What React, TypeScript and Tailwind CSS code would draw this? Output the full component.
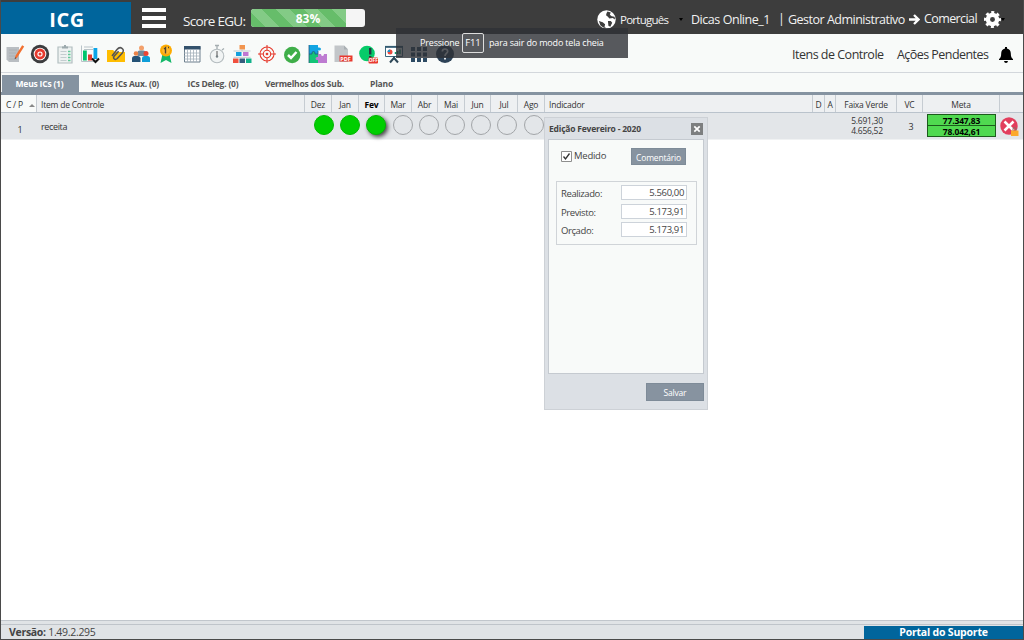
import type { ReactNode } from "react";
import clsx from "clsx";

const tabs = [
  { label: "Meus ICs (1)", cls: "w-[77px] bg-[#8593a1] pr-0.5 text-white" },
  { label: "Meus ICs Aux. (0)", cls: "w-[92px]" },
  { label: "ICs Deleg. (0)", cls: "w-[84px]" },
  { label: "Vermelhos dos Sub.", cls: "w-[99px]" },
  { label: "Plano", cls: "w-[55px]" },
];

const columns = [
  { label: "C / P", cls: "w-[36px] pl-[5px] bg-[#f8faf9]" },
  { label: "Item de Controle", cls: "w-[268px] pl-1" },
  { label: "Dez", cls: "w-[27px] justify-center" },
  { label: "Jan", cls: "w-[27px] justify-center" },
  { label: "Fev", cls: "w-[26px] justify-center font-bold text-black" },
  { label: "Mar", cls: "w-[27px] justify-center" },
  { label: "Abr", cls: "w-[26px] justify-center" },
  { label: "Mai", cls: "w-[27px] justify-center" },
  { label: "Jun", cls: "w-[26px] justify-center" },
  { label: "Jul", cls: "w-[27px] justify-center" },
  { label: "Ago", cls: "w-[27px] justify-center" },
  { label: "Indicador", cls: "w-[268px] pl-1" },
  { label: "D", cls: "w-[12px] justify-center" },
  { label: "A", cls: "w-[11px] justify-center" },
  { label: "Faixa Verde", cls: "w-[61px] justify-center" },
  { label: "VC", cls: "w-[26px] justify-center" },
  { label: "Meta", cls: "w-[77px] justify-center" },
];

const months = [true, true, true, false, false, false, false, false, false];

const fields = [
  { label: "Realizado:", value: "5.560,00" },
  { label: "Previsto:", value: "5.173,91" },
  { label: "Orçado:", value: "5.173,91" },
];

// every toolbar icon is drawn on a 20x20 grid
const icons: ReactNode[] = [
  <>
    <path d="M1.500 3H14v15H4l-2.500-2.500z" fill="#b9bec2" />
    <path d="M4 6h8M4 9h7M4 12h6M4 15h8" stroke="#a6acb0" strokeWidth=".8" />
    <path d="M17.200 1.200l2 1.200-7 11-2.300 1.500.4-3z" fill="#f2702f" />
    <path d="M9.700 15.200l.3-2 1.300.9z" fill="#3b4a55" />
  </>,
  <>
    <circle cx="10" cy="10" r="9.200" fill="#3d3d3f" />
    <circle cx="10" cy="10" r="6.300" fill="#fff" />
    <circle cx="10" cy="10" r="5.400" fill="#e63a2e" />
    <circle cx="10" cy="10" r="2.600" fill="#fff" />
    <circle cx="10" cy="10" r="1.500" fill="#e63a2e" />
  </>,
  <>
    <path d="M3 3h14v16H3z" fill="#eef2f1" stroke="#b2bec0" strokeWidth="1.200" />
    <path d="M7 4.500V2.500h2V1h2v1.500h2v2z" fill="#9daaad" />
    <path d="M5.500 7.500h6M5.500 10.500h6M5.500 13.500h6M5.500 16.500h6" stroke="#c3cdcf" />
    <path d="M13 7.500h2.500M13 10.500h2.500M13 13.500h2.500M13 16.500h2.500" stroke="#5fcb98" strokeWidth="1.300" />
  </>,
  <>
    <path d="M1.500 1.500v16H14M4 3h9M4 5.500h9" fill="none" stroke="#b9c3c8" />
    <path d="M3 6.500h3.800v10H3z" fill="#00c56c" />
    <path d="M8 10.500h4v6H8z" fill="#e23d30" />
    <path d="M13.500 4h3.800v11h-3.800z" fill="#0aa5e8" />
    <path d="M12 14.500l3.500 3.500L19 14.500" fill="none" stroke="#111" strokeWidth="2" />
  </>,
  <>
    <path d="M1 6h6l2 2h10v10H1z" fill="#ffbd00" />
    <path d="M6 12l5-6.500q2.500-3 5-1.200t.3 4.700l-5 5.500q-1.700 1.500-3 .5t-.2-2.800l4.500-5" fill="none" stroke="#555" strokeWidth="1.500" />
  </>,
  <>
    <circle cx="10.500" cy="4" r="2.500" fill="#f3a06b" />
    <path d="M6.500 12V8.500q0-2 2-2h4q2 0 2 2V12z" fill="#71889a" />
    <circle cx="5" cy="9.500" r="2.300" fill="#e98349" />
    <circle cx="15" cy="9.500" r="2.500" fill="#e94435" />
    <path d="M1 18v-3.500q0-2.500 2.500-2.500h3Q9.500 12 9.500 14.500V18z" fill="#245276" />
    <path d="M11 18v-3.500q0-2.500 2.500-2.500h3q2.500 0 2.500 2.500V18z" fill="#0e9dd8" />
  </>,
  <>
    <path d="M6.500 10h7L15.500 19 10 16l-5.500 3z" fill="#13b868" />
    <circle cx="10" cy="6.500" r="6" fill="#ffae00" />
    <circle cx="10" cy="6.500" r="4.300" fill="#ffb92b" stroke="#f29b00" strokeWidth=".6" />
    <path d="M8 5l1.500-1.300V9.500M12 3.500h1" fill="none" stroke="#4d4430" strokeWidth="1.400" />
  </>,
  <>
    <path d="M2.500 2.500h15.500v15.500H2.500z" fill="#fff" stroke="#6c7f8d" />
    <path d="M2 2h16.500v3.500H2z" fill="#33516c" />
    <path d="M2 9h16M2 12h16M2 15h16M5.500 6v12M8.500 6v12M11.500 6v12M14.500 6v12" stroke="#a3b0ba" strokeWidth=".8" />
  </>,
  <>
    <circle cx="10" cy="12" r="6.800" fill="#f1f4f4" stroke="#b4bcbf" strokeWidth="1.100" />
    <path d="M10 1v4M8 1.500h4M15 6l2-1.500" stroke="#a4adb0" strokeWidth="1.300" />
    <path d="M10 12.500V7" stroke="#555" />
    <circle cx="10" cy="12.500" r="1.200" fill="#758084" />
  </>,
  <>
    <path d="M7.500 1h5.500v4.500H7.500z" fill="#f2954f" />
    <path d="M4 8h5.500v4H4z" fill="#15a0dd" />
    <path d="M11 8h5.500v4H11z" fill="#c076d2" />
    <path d="M1 14.500h5.500V19H1z" fill="#f0503d" />
    <path d="M7.500 14.500H13V19H7.500z" fill="#355c7d" />
    <path d="M14 14.500h5.500V19H14z" fill="#12b28b" />
    <path d="M10 5.500v1.500M1.500 7h17M1.500 13.300h17" stroke="#b4bec2" strokeWidth=".8" />
  </>,
  <g fill="none" stroke="#e5392c" strokeWidth="1.100">
    <circle cx="10" cy="10" r="7" />
    <circle cx="10" cy="10" r="3.700" />
    <path d="M10 1v5M10 14v5M1 10h5M14 10h5" />
    <circle cx="10" cy="10" r=".8" fill="#e5392c" />
  </g>,
  <>
    <circle cx="9.200" cy="11" r="8.200" fill="#3fae49" />
    <path d="M5 11l3 3 5.500-6" fill="none" stroke="#fff" strokeWidth="2.500" />
  </>,
  <>
    <path d="M1 1h9v2.500q3-.5 3 1.500t-3 1.500V10H1z" fill="#12a4e2" />
    <path d="M1 10h3q-.5-2.500 1.500-2.500T7 10h3v9H1z" fill="#13c477" />
    <path d="M10 10h3q0 2 1.500 2T16 10h3v9h-9v-3q-2.500.5-2.500-1.500T10 13z" fill="#bd7bd1" />
    <path d="M1 1v18M1 10h3q-.5-2.500 1.500-2.500T7 10h3V7" fill="none" stroke="#24567c" strokeWidth=".8" />
  </>,
  <>
    <path d="M1.500 1.500H11l4 4V18H1.500z" fill="#c2c6c9" />
    <path d="M11 1.500v4h4" fill="#a9afb3" />
    <path d="M6.500 11.500h13v6h-13z" fill="#e8392f" />
    <text x="7.300" y="16.600" fill="#fff" fontSize="5.500" fontWeight="700" fontFamily="Open Sans">PDF</text>
  </>,
  <>
    <circle cx="8" cy="9.500" r="7.800" fill="#06cb69" />
    <path d="M11.200 4v6.500M11.200 12v2" stroke="#243642" strokeWidth="2.400" />
    <rect x="9.500" y="13.500" width="9.500" height="6" rx="1" fill="#e8392f" />
    <text x="9.800" y="18.400" fill="#fff" fontSize="4.800" fontWeight="700" fontFamily="Open Sans">OFF</text>
  </>,
  <>
    <path d="M1.500 3h17v9.500h-17z" fill="#fff" stroke="#3e677c" />
    <path d="M1 2.800h18" stroke="#345c73" strokeWidth="1.800" />
    <circle cx="6" cy="8" r="2.500" fill="#eb493e" />
    <path d="M6 8V5.500A2.500 2.500 0 0 0 3.500 8z" fill="#1796cf" />
    <path d="M11.500 10V8M13.700 10V7M16 10V5.500" stroke="#159b70" strokeWidth="1.500" />
    <path d="M10 12.500v2.500M9.500 14.500L6 18.500M10.500 14.500l3.500 4" stroke="#2f4858" strokeWidth="2" />
  </>,
  <path d="M2 3h4v4H2zM8 3h4v4H8zM14 3h4v4h-4zM2 8.500h4v4H2zM8 8.500h4v4H8zM14 8.500h4v4h-4zM2 14h4v4H2zM8 14h4v4H8zM14 14h4v4h-4z" fill="#2d4a63" />,
  <>
    <circle cx="10" cy="10" r="9" fill="#2d4257" />
    <path d="M7.300 7.500Q7.500 5 10 5t2.700 2.300C12.700 9.500 10 9.500 10 12M10 13.500v2" fill="none" stroke="#fff" strokeWidth="1.700" />
  </>,
];

function Header() {
  return (
    <header className="flex h-[34px] shrink-0 items-center bg-[#3d3d3d] pt-0.5 text-[#f2f2f2]">
      <div className="flex h-8 w-[130px] items-center justify-center self-end bg-[#00659c] pt-1 pl-0.5 text-[20px] font-bold tracking-[0.6px] text-white">ICG</div>
      <div className="ml-[11px] flex w-6 flex-col gap-[4px]">
        <i className="h-[4px] bg-white" />
        <i className="h-[4px] bg-white" />
        <i className="h-[4px] bg-white" />
      </div>
      <span className="ml-[17px] w-[68px] pt-1.5 text-[13.500px] tracking-[-0.7px]">Score EGU:</span>
      <div className="relative flex h-[18px] w-[114px] overflow-hidden rounded-[3px] bg-[#f5f5f5]">
        <div className="h-full w-[95px] bg-[repeating-linear-gradient(45deg,#66bd6a_0_10px,#83cb86_10px_20px)]" />
        <span className="absolute inset-0 text-center text-[12px] leading-[19px] font-bold text-white">83%</span>
      </div>
      <div className="ml-[232px] flex h-full items-center pt-[3px]">
        <svg className="size-[19px]" viewBox="0 0 20 20">
          <circle cx="10" cy="10" r="9.700" fill="#fff" />
          <path d="M11 1.500l3.500 1-1 2.500 2 1.500 3 .5.5 3-2.500-1.500-3.500.5-1.500-2-2-1.500.5-2zM2 11.500l4 1.500 2.500 2-.5 2.500 1.500 1.500-3-.5-3-2.500zM11.500 11.500l3 0 1.500 2-2 4-2-1z" fill="#3d3d3d" />
        </svg>
        <span className="ml-1 w-[59px] text-[11.500px] tracking-[-0.75px]">Português</span>
        <i className="size-0 border-x-2 border-t-[3px] border-x-transparent border-t-black" />
        <span className="ml-[8px] w-[87px] pt-0.5 text-[12.500px] tracking-[-0.45px]">Dicas Online_1</span>
        <span className="w-[10px] text-[12.500px]">|</span>
        <span className="w-[121px] pt-0.5 text-[12.500px] tracking-[-0.5px]">Gestor Administrativo</span>
        <svg className="h-[11px] w-[11px]" viewBox="0 0 11 11">
          <path d="M0 5.500h9M5 1l4.500 4.500L5 10" fill="none" stroke="#fff" strokeWidth="2.300" />
        </svg>
        <span className="ml-1 w-[60px] text-[12.500px] tracking-[-0.6px]">Comercial</span>
        <svg className="size-[17px]" viewBox="0 0 24 24">
          <circle cx="12" cy="12" r="6.500" fill="none" stroke="#fff" strokeWidth="6" />
          <circle cx="12" cy="12" r="10" fill="none" stroke="#fff" strokeWidth="4" strokeDasharray="4.200 3.654" strokeDashoffset="2.100" />
        </svg>
        <i className="size-0 border-x-2 border-t-[3px] border-x-transparent border-t-black" />
      </div>
    </header>
  );
}

function Toolbar() {
  return (
    <div className="flex h-[39px] shrink-0 items-center border-b border-[#d3d7dc] bg-[#f8faf9] pt-px pl-[3.500px]">
      <div className="flex gap-[5.300px]">
        {icons.map((icon, i) => (
          <svg key={i} className="size-5 shrink-0" viewBox="0 0 20 20">
            {icon}
          </svg>
        ))}
      </div>
      <div className="ml-auto flex items-center pt-0.5 pr-[10px] text-[12.500px] text-[#333]">
        <span className="w-[105px] pt-0.5 tracking-[-0.5px]">Itens de Controle</span>
        <span className="w-[102px] pt-0.5 tracking-[-0.55px]">Ações Pendentes</span>
        <svg className="h-4 w-[14px]" viewBox="0 0 14 16">
          <path d="M6 0h2v1.500c2.600.6 3.800 2.400 3.800 5 0 3 .7 4.500 2.200 5.500v1H0v-1c1.500-1 2.200-2.500 2.200-5.500 0-2.600 1.200-4.400 3.800-5zM5 14h4q-.3 2-2 2t-2-2z" fill="#000" />
        </svg>
      </div>
    </div>
  );
}

function Row() {
  return (
    <div className="flex h-[27px] shrink-0 items-center border-b border-[#f0f2f3] bg-[#e3e6e9] text-[9px] text-[#333]">
      <span className="w-[38px] pt-2 text-center">1</span>
      <span className="w-[275px] pt-0.5 pl-[2px] tracking-[-0.35px]">receita</span>
      <div className="flex gap-[6.200px] pb-0.5">
        {months.map((done, i) => (
          <i
            key={i}
            className={clsx(
              "size-5 shrink-0 rounded-full border",
              done ? "border-[#00b900] bg-[#00cf00]" : "border-[#a2a5a8]",
              i === 2 && "shadow-[2px_2px_4px_#444]",
            )}
          />
        ))}
      </div>
      <div className="ml-auto flex w-[187px] items-center pb-px">
        <div className="w-[62px] text-center text-[8.500px] leading-[10px] tracking-[-0.25px]">
          <p>5.691,30</p>
          <p>4.656,52</p>
        </div>
        <span className="w-[26px] pt-0.5 text-center">3</span>
        <div className="ml-[3px] w-[69px] border border-[#1c5c1c] bg-[#50d950] text-center text-[8.500px] leading-[11px] font-bold tracking-[-0.15px] text-black">
          <p className="h-[11px] border-b border-[#1c5c1c]">77.347,83</p>
          <p className="h-[10px]">78.042,61</p>
        </div>
        <svg className="ml-[4px] h-5 w-[19px]" viewBox="0 0 19 20">
          <circle cx="9" cy="10" r="8.700" fill="#e23e5d" />
          <path d="M4.500 5.500l9 9M13.500 5.500l-9 9" stroke="#fff" strokeWidth="2.500" />
          <path d="M13 15v-2q0-1.500 1.500-1.500T16 13v2" fill="none" stroke="#857269" />
          <path d="M11 14.500h7.500V20H11z" fill="#fca92c" />
        </svg>
      </div>
    </div>
  );
}

function EditDialog() {
  return (
    <div className="absolute top-[117px] left-[543px] flex h-[293px] w-[164px] flex-col border border-[#cdd1d6] bg-[#dce0e5] px-[3px] text-[#444]">
      <div className="flex h-[21px] items-center justify-between pr-[1px] pl-px">
        <b className="pt-0.5 text-[8.500px] tracking-[-0.2px]">Edição Fevereiro - 2020</b>
        <svg className="size-3" viewBox="0 0 12 12">
          <path d="M0 0h12v12H0z" fill="#7d7f80" />
          <path d="M3.300 3.300l5.400 5.400M8.700 3.300L3.300 8.700" stroke="#fff" strokeWidth="1.700" />
        </svg>
      </div>
      <div className="h-[235px] border border-[#c5cad0] bg-[#f8faf9] px-[7px] pt-[7px]">
        <div className="flex h-[18px] items-center pl-[5px] text-[9.500px]">
          <svg className="size-[11px]" viewBox="0 0 11 11">
            <path d="M.5.500h10v10H.5z" fill="#fff" stroke="#8e8e8e" />
            <path d="M2.500 5.500l2 2.500 4-5.500" fill="none" stroke="#333" strokeWidth="1.300" />
          </svg>
          <span className="ml-[2px] w-[57px] pt-px tracking-[-0.25px]">Medido</span>
          <button className="h-[17px] w-[55px] border border-[#7e8b98] bg-[#8793a0] pt-px text-[8.500px] leading-[15px] tracking-[-0.2px] text-white">Comentário</button>
        </div>
        <div className="mt-[16px] flex h-[64px] w-[141px] flex-col gap-[3.500px] border border-[#d0d4d8] pt-[3px] pl-1">
          {fields.map((f) => (
            <label key={f.label} className="flex h-[15px] text-[9.500px]">
              <span className="w-[60px] pt-0.5 tracking-[-0.4px]">{f.label}</span>
              <span className="h-[15px] w-[66px] border border-[#cdd3da] bg-white pr-[2px] text-right leading-[13px] tracking-[-0.35px]">{f.value}</span>
            </label>
          ))}
        </div>
      </div>
      <button className="mt-[9px] h-[18px] w-[58px] self-end border border-[#7e8b98] bg-[#8793a0] pt-0.5 text-[8.500px] leading-[14px] tracking-[-0.2px] text-white">Salvar</button>
    </div>
  );
}

export default function App() {
  return (
    <div className="relative flex h-[640px] w-[1024px] flex-col overflow-hidden border border-t-0 border-[#4a4a4a] bg-white font-['Open_Sans','Noto_Sans',sans-serif] whitespace-nowrap">
      <Header />
      <Toolbar />
      <nav className="flex h-[22px] shrink-0 border-b-[3px] border-[#8593a1] bg-[#f8faf9] pt-0.5 pl-px text-[8.500px] font-bold tracking-[-0.2px] text-[#555]">
        {tabs.map((tab) => (
          <div key={tab.label} className={clsx("flex items-center justify-center pt-0.5", tab.cls)}>
            {tab.label}
          </div>
        ))}
      </nav>
      <div className="flex h-[18px] shrink-0 border-b border-[#bac3cc] bg-[#eef0f2] text-[8.500px] tracking-[-0.22px] text-[#333]">
        {columns.map((c) => (
          <div key={c.label} className={clsx("flex shrink-0 items-center border-r border-[#c6ccd2] pt-[3px]", c.cls)}>
            {c.label}
            {c.label === "C / P" && <i className="ml-[6px] border-x-[3px] border-b-[3px] border-x-transparent border-b-[#888]" />}
          </div>
        ))}
      </div>
      <Row />
      <main className="flex-1" />
      <footer className="h-[19px] shrink-0 border-t border-[#c1c6cc] bg-[#e0e3e6] pt-[3px]">
        <div className="flex h-[15px] items-center justify-between border-t border-[#bfc4ca] pl-2 text-[10.500px] tracking-[-0.3px] text-[#444]">
          <span className="pt-0.5">
            <b>Versão:</b> 1.49.2.295
          </span>
          <div className="mt-px h-[13px] w-[159px] bg-[#00659c] text-center text-[10.500px] leading-[13px] font-bold tracking-[-0.2px] text-white">Portal do Suporte</div>
        </div>
      </footer>
      <EditDialog />
      <div className="absolute top-[28px] left-[395px] flex h-[30px] w-[232px] items-center bg-[#2e3136]/80 pl-6 text-[9px] tracking-[-0.17px] text-white">
        <span className="w-[42px]">Pressione</span>
        <kbd className="flex h-5 w-[22px] items-center justify-center rounded-[2px] border border-[#ddd] font-[inherit] text-[9.500px]">F11</kbd>
        <span className="ml-[5px]">para sair do modo tela cheia</span>
      </div>
    </div>
  );
}
